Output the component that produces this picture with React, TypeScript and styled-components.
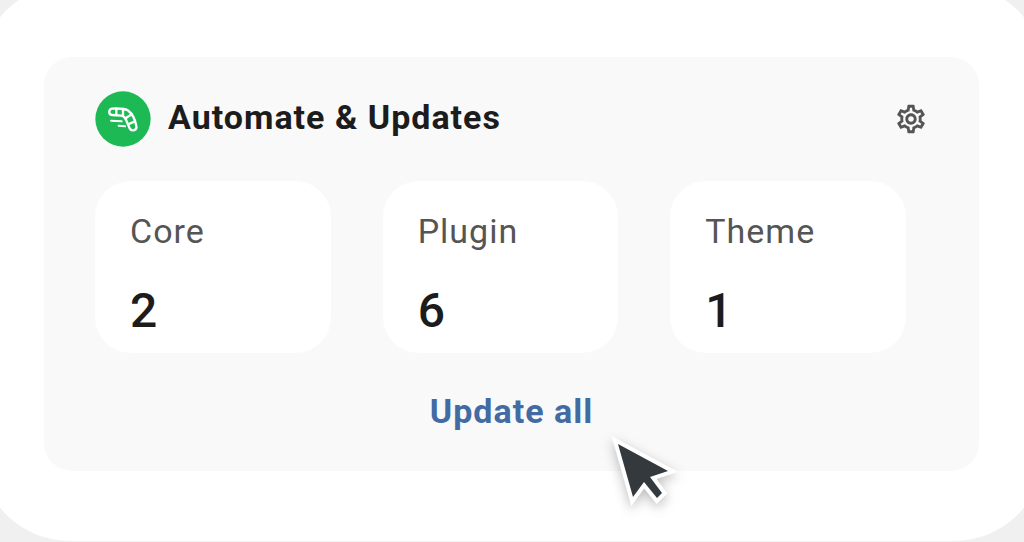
import React from 'react';
import styled, { createGlobalStyle } from 'styled-components';
import { MdOutlineSettings } from 'react-icons/md';

const GlobalStyle = createGlobalStyle`
  *, *::before, *::after { box-sizing: border-box; }
  body {
    margin: 0;
    background: #f0f0f0;
    font-family: Roboto, 'Liberation Sans', sans-serif;
    color: #1c1c1c;
  }
`;

const Page = styled.div`
  display: flow-root;
  overflow: hidden;
`;

const Sheet = styled.main`
  margin: -16px -20px 0;
  padding: 73px 65px 70px 64px;
  border-radius: 90px;
  background: #fff;
`;

const Panel = styled.section`
  padding: 34px 51px 40px;
  border-radius: 28px;
  background: #f9f9f9;
`;

const Header = styled.header`
  display: flex;
  align-items: center;
  gap: 17px;
  height: 56px;
`;

const Title = styled.h1`
  flex: 1;
  margin: 0;
  padding-bottom: 4px;
  font-size: 34px;
  line-height: 40px;
  font-weight: 700;
  letter-spacing: 1px;
`;

const IconButton = styled.button`
  display: flex;
  padding: 0;
  border: 0;
  background: none;
  color: #555;
  cursor: pointer;
`;

const Stats = styled.dl`
  display: grid;
  grid-template-columns: repeat(3, 1fr);
  gap: 52px;
  margin: 34px 22px 0 0;
`;

const Stat = styled.div`
  padding: 30px 35px 14px;
  border-radius: 36px;
  background: #fff;
`;

const StatLabel = styled.dt`
  font-size: 34px;
  line-height: 40px;
  color: #555;
  letter-spacing: 1px;
`;

const StatValue = styled.dd`
  margin: 32px 0 0;
  font-size: 48px;
  line-height: 56px;
  font-weight: 500;
`;

const Actions = styled.div`
  display: flex;
  justify-content: center;
  margin-top: 38px;
`;

const UpdateButton = styled.button`
  position: relative;
  padding: 0;
  border: 0;
  background: none;
  font: inherit;
  font-size: 34px;
  line-height: 40px;
  font-weight: 700;
  letter-spacing: 1px;
  color: #426ba3;
  cursor: pointer;
`;

const Pointer = styled.svg`
  position: absolute;
  left: 100%;
  top: 100%;
  margin: -10px 0 0 8px;
  overflow: visible;
  pointer-events: none;
  filter: drop-shadow(0 4px 6px rgba(0, 0, 0, 0.25));
`;

const BoomerangLogo = () => (
  <svg width="56" height="56" viewBox="0 0 168 168" aria-hidden="true">
    <circle cx="84" cy="84" r="83" fill="#1db954" />
    <g fill="none" stroke="#fff" strokeWidth="7" strokeLinecap="round" strokeLinejoin="round">
      <path d="M51 53C40 55 40 71 51 72L79 74C86 75 90 79 93 86L104 112C110 123 127 118 124 105C120 84 111 67 98 58C89 53 70 52 51 53Z" />
      <path d="M64 54V72M84 54V74M111 69L92 82M120 91L99 100" />
      <path d="M48 89L80 91M71 104L90 106" strokeWidth="6" />
    </g>
  </svg>
);

const stats = [
  { label: 'Core', value: 2 },
  { label: 'Plugin', value: 6 },
  { label: 'Theme', value: 1 },
];

export default function App() {
  return (
    <Page>
      <GlobalStyle />
      <Sheet>
        <Panel>
          <Header>
            <BoomerangLogo />
            <Title>Automate &amp; Updates</Title>
            <IconButton type="button" aria-label="Settings">
              <MdOutlineSettings size={34} />
            </IconButton>
          </Header>
          <Stats>
            {stats.map((s) => (
              <Stat key={s.label}>
                <StatLabel>{s.label}</StatLabel>
                <StatValue>{s.value}</StatValue>
              </Stat>
            ))}
          </Stats>
          <Actions>
            <UpdateButton type="button">
              Update all
              <Pointer width="74" height="78" viewBox="0 0 74 78" aria-hidden="true">
                <path
                  d="M17 23L32 76L43 61L56 77L61 72L49 56L67 50Z"
                  fill="#33393d"
                  stroke="#fff"
                  strokeWidth="8"
                  paintOrder="stroke"
                />
              </Pointer>
            </UpdateButton>
          </Actions>
        </Panel>
      </Sheet>
    </Page>
  );
}
